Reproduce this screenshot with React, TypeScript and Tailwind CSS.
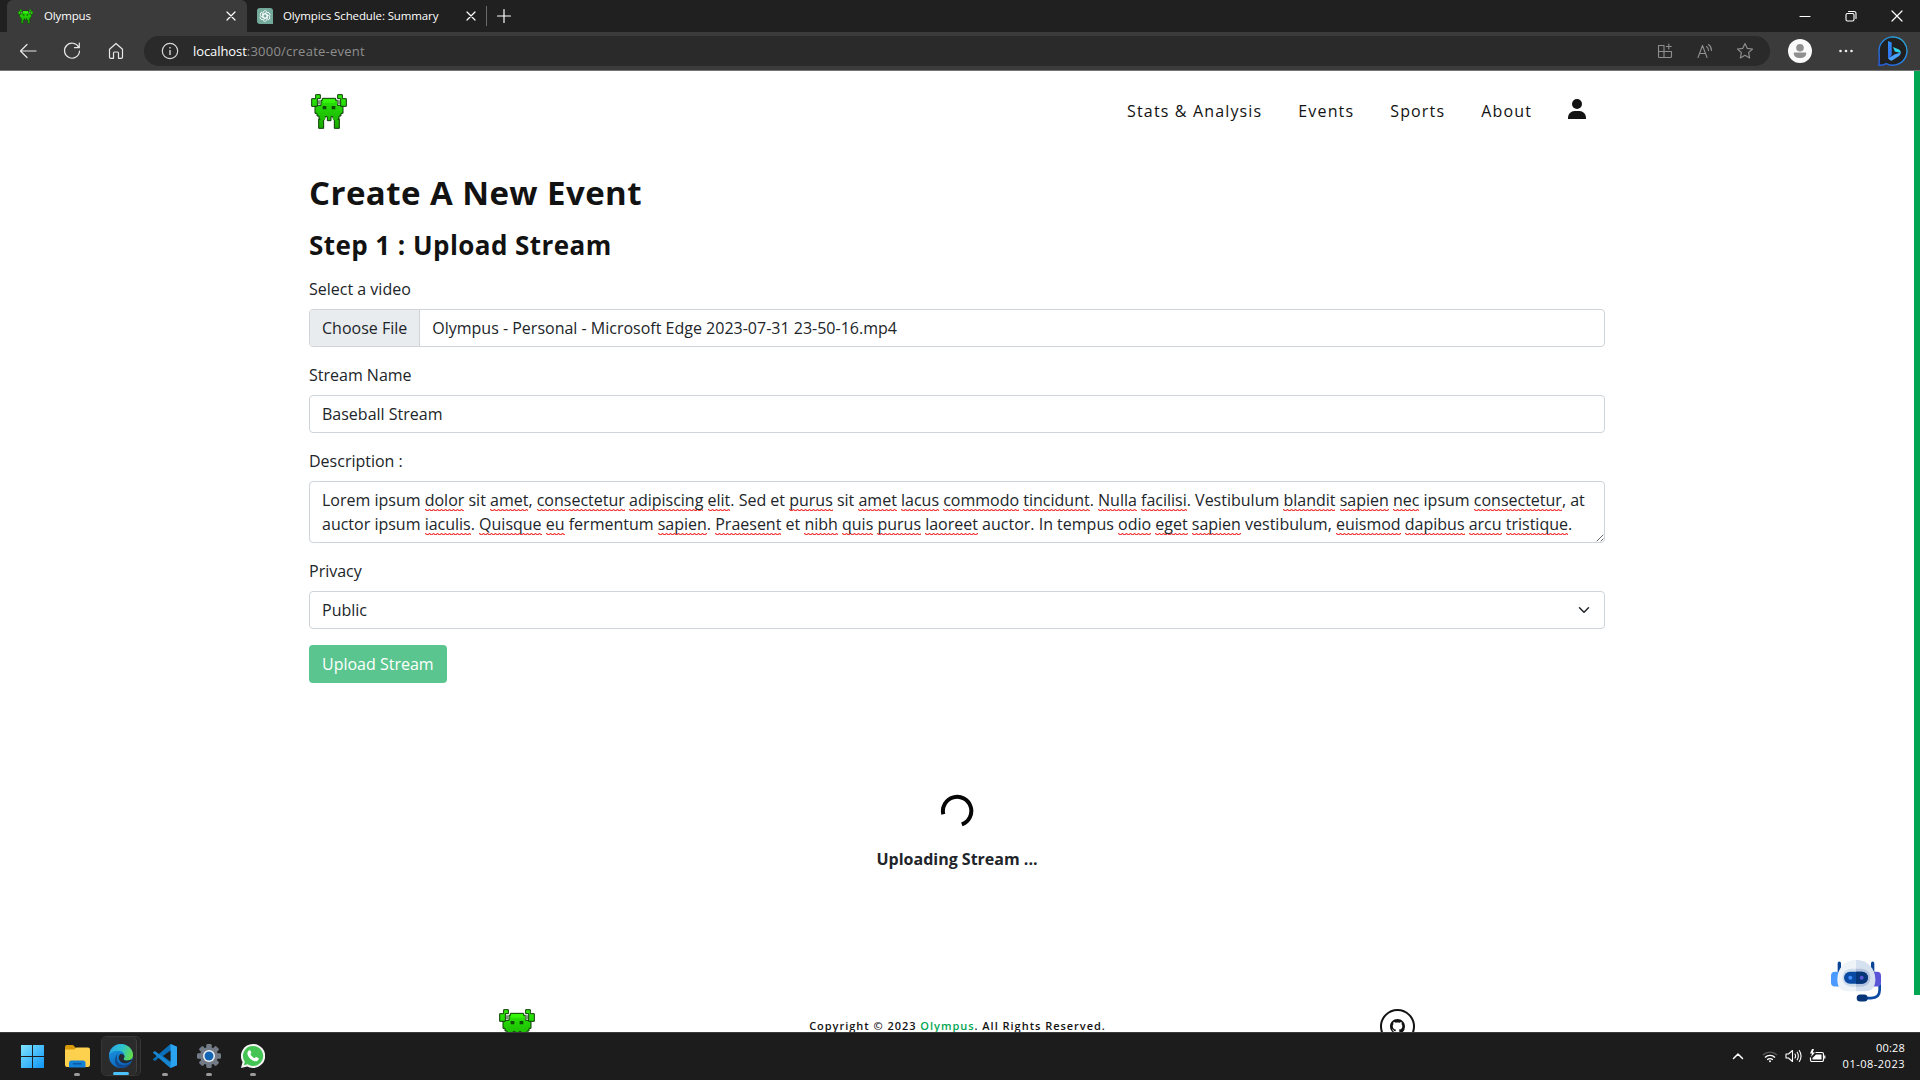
import React from "react";

const Squiggle = ({ children }: { children: React.ReactNode }) => (
  <span className="bg-[linear-gradient(90deg,#ef3a3a_0_1px,#f9a5a5_1px_2px,transparent_2px_3px,#f9a5a5_3px_4px),linear-gradient(90deg,#fbc4c4_0_1px,#f04a4a_1px_2px,#ef3a3a_2px_3px,#f04a4a_3px_4px)] bg-[length:4px_1px,4px_1px] bg-[position:0_calc(100%-1px),0_100%] bg-repeat-x">
    {children}
  </span>
);

const line1: [string, boolean][] = [
  ["Lorem ipsum ", false], ["dolor", true], [" sit ", false], ["amet", true], [", ", false], ["consectetur", true], [" ", false],
  ["adipiscing", true], [" ", false], ["elit", true], [". Sed et ", false], ["purus", true], [" sit ", false], ["amet", true], [" ", false],
  ["lacus", true], [" ", false], ["commodo", true], [" ", false], ["tincidunt", true], [". ", false], ["Nulla", true], [" ", false],
  ["facilisi", true], [". Vestibulum ", false], ["blandit", true], [" ", false], ["sapien", true], [" ", false], ["nec", true],
  [" ipsum ", false], ["consectetur", true], [", at", false],
];
const line2: [string, boolean][] = [
  ["auctor ipsum ", false], ["iaculis", true], [". ", false], ["Quisque", true], [" ", false], ["eu", true], [" fermentum ", false],
  ["sapien", true], [". ", false], ["Praesent", true], [" et ", false], ["nibh", true], [" ", false], ["quis", true], [" ", false],
  ["purus", true], [" ", false], ["laoreet", true], [" auctor. In tempus ", false], ["odio", true], [" ", false], ["eget", true],
  [" ", false], ["sapien", true], [" vestibulum, ", false], ["euismod", true], [" ", false], ["dapibus", true], [" ", false],
  ["arcu", true], [" ", false], ["tristique", true], [".", false],
];

const Line = ({ parts }: { parts: [string, boolean][] }) => (
  <div className="whitespace-pre">
    {parts.map(([t, bad], i) => (bad ? <Squiggle key={i}>{t}</Squiggle> : <span key={i}>{t}</span>))}
  </div>
);

const Alien = ({ className }: { className: string }) => (
  <svg viewBox="0 0 108 105" className={className}>
    <defs>
      <linearGradient id="alien" gradientUnits="userSpaceOnUse" x1="0" y1="0" x2="0" y2="105">
        <stop offset="0" stopColor="#2ff00a" />
        <stop offset="0.45" stopColor="#22cf04" />
        <stop offset="1" stopColor="#18a800" />
      </linearGradient>
    </defs>
    <g fill="url(#alien)" stroke="#0b3d05" strokeWidth="3">
      <path d="M34 13H74V19H80V34H96V58H90V66H84V76H76V74H66V68H60V80H49V68H42V74H32V76H24V66H18V58H12V34H30V19H34Z" />
      <path d="M14 2H28V14H19V37H2V14H14Z" />
      <path d="M94 2H80V14H89V37H106V14H94Z" />
      <path d="M23 76H38V103H23Z" />
      <path d="M70 76H85V103H70Z" />
      <path d="M28 68H42V78H28ZM66 68H80V78H66Z" stroke="none" />
    </g>
    <path d="M36 15H72V26H36Z" fill="#35f50d" />
    <path d="M21 19H29V31H21ZM79 19H87V31H79Z" fill="#7a917a" />
    <path d="M35 36H46V46H35ZM62 36H73V46H62Z" fill="#0c4a05" />
  </svg>
);

const Stroke = ({ d, className, w = 1, box = "0 0 16 16" }: { d: string; className: string; w?: number; box?: string }) => (
  <svg viewBox={box} className={className} fill="none" stroke="currentColor" strokeWidth={w} strokeLinecap="round" strokeLinejoin="round">
    <path d={d} />
  </svg>
);

const OpenAI = () => (
  <svg viewBox="0 0 16 16" className="h-4 w-4">
    <path d="M3 0H13A3 3 0 0 1 16 3V16H3A3 3 0 0 1 0 13V3A3 3 0 0 1 3 0Z" fill="#74aa9c" />
    <g fill="none" stroke="#fff" strokeWidth="0.85">
      {[0, 60, 120, 180, 240, 300].map((a) => (
        <path key={a} transform={`rotate(${a} 8 8)`} d="M5.9 9.3V5A2.3 2.3 0 0 1 10 3.6M5.9 6.8L9.3 4.9" />
      ))}
    </g>
  </svg>
);

const TabStrip = () => (
  <div className="flex h-8 bg-[#202020] pl-[7px] text-[11.5px] text-white">
    <div className="flex w-60 items-center rounded-t-md bg-[#3b3b3b] pl-[11px] pr-2">
      <Alien className="h-[15px] w-[15px]" />
      <span className="ml-[11px] flex-1 tracking-[-0.15px]">Olympus</span>
      <Stroke d="M4 4L12 12M12 4L4 12" className="h-4 w-4" w={1.2} />
    </div>
    <div className="flex w-[239px] items-center pl-[10px] pr-[7px]">
      <OpenAI />
      <span className="ml-[10px] flex-1 whitespace-nowrap tracking-[-0.12px]">Olympics Schedule: Summary</span>
      <Stroke d="M4 4L12 12M12 4L4 12" className="h-4 w-4" w={1.2} />
    </div>
    <div className="my-[6px] w-px bg-[#6b6b6b]" />
    <Stroke d="M8 1.5V14.5M1.5 8H14.5" className="ml-[9px] mt-2 h-4 w-4" w={1.2} />
    <div className="ml-auto mt-2 flex h-4 gap-[30px] pr-[15px]">
      <Stroke d="M3 8.5H13" className="h-4 w-4" w={1.2} />
      <Stroke d="M4.5 5.5H9.5A1.5 1.5 0 0 1 11 7V11.500A1.500 1.500 0 0 1 9.500 13H4.500A1.500 1.500 0 0 1 3 11.500V7A1.500 1.500 0 0 1 4.500 5.500ZM5.500 3.500H11A2 2 0 0 1 13 5.500V10.500" className="h-4 w-4" w={1.100} />
      <Stroke d="M3 3L13 13M13 3L3 13" className="h-4 w-4" w={1.2} />
    </div>
  </div>
);

const Toolbar = () => (
  <div className="flex h-[39px] items-start border-b border-[#757575] bg-[#3b3b3b] pt-1">
    <div className="flex h-[30px] w-36 items-center text-[#e8e8e8]">
      <Stroke box="0 0 20 20" d="M18 10H2.500M9 3.500L2.500 10L9 16.500" className="ml-[18px] h-5 w-5" w={1.2} />
      <Stroke box="0 0 20 20" d="M16.800 6.500A7.500 7.500 0 1 0 17.500 10M17.300 2V6.700H12.500" className="ml-[24px] h-5 w-5" w={1.2} />
      <Stroke box="0 0 20 20" d="M3.500 8.300L10 2.500L16.500 8.300V16A1.300 1.300 0 0 1 15.200 17.300H12.500V12A1 1 0 0 0 11.500 11H8.500A1 1 0 0 0 7.500 12V17.300H4.800A1.300 1.300 0 0 1 3.500 16Z" className="ml-[24px] h-5 w-5" w={1.2} />
    </div>
    <div className="flex h-[30px] w-[1626px] items-center rounded-full bg-[#2a2a2a] pl-[17px] pr-[16px]">
      <svg viewBox="0 0 18 18" className="h-[18px] w-[18px]" fill="none" stroke="#d8d8d8" strokeWidth="1.200">
        <circle cx="9" cy="9" r="7.700" />
        <path d="M9 8V13M9 5V6.400" strokeWidth="1.400" />
      </svg>
      <span className="ml-[14px] pt-px text-[13px] tracking-[-0.08px] text-white">localhost</span>
      <span className="pt-px text-[13px] tracking-[0.24px] text-[#8e8e8e]">:3000/create-event</span>
      <div className="ml-auto flex items-center gap-[22px] text-[#8e8e8e]">
        <Stroke box="0 0 18 18" d="M2.500 3.500H8V15.500H3.500A1 1 0 0 1 2.500 14.500ZM2.500 9.500H15.500V14.500A1 1 0 0 1 14.500 15.500H8M12.800 2V7M10.300 4.500H15.300" className="h-[18px] w-[18px]" w={1.100} />
        <Stroke box="0 0 18 18" d="M2 15.500L6.500 3.500L11 15.500M3.500 11.500H9.500M10.500 4.500Q12.500 6 12.500 8.500M12.500 2.500Q15.500 4.500 15.500 8.500" className="h-[18px] w-[18px]" w={1.100} />
        <Stroke box="0 0 18 18" d="M9 1.500L11.200 6.300L16.500 7L12.600 10.600L13.600 15.900L9 13.300L4.400 15.900L5.400 10.600L1.500 7L6.800 6.300Z" className="h-[18px] w-[18px]" w={1.200} />
      </div>
    </div>
    <div className="flex h-[30px] items-center pl-[18px]">
      <svg viewBox="0 0 24 24" className="h-6 w-6">
        <circle cx="12" cy="12" r="12" fill="#fafafa" />
        <circle cx="12" cy="8.700" r="3.800" fill="#8f8f8f" />
        <path d="M6.300 13.500H17.700A0.800 0.800 0 0 1 18.300 14.400C18 17.500 15.500 19 12 19S6 17.500 5.700 14.400A0.800 0.800 0 0 1 6.300 13.500Z" fill="#8f8f8f" />
      </svg>
      <svg viewBox="0 0 16 4" className="ml-[26px] h-1 w-4" fill="#eee">
        <circle cx="2.500" cy="2" r="1.300" /><circle cx="8" cy="2" r="1.300" /><circle cx="13.500" cy="2" r="1.300" />
      </svg>
      <svg viewBox="0 0 30 30" className="ml-6 h-[30px] w-[30px]">
        <defs>
          <linearGradient id="bingRing" x1="1" y1="0" x2="0.200" y2="1"><stop offset="0" stopColor="#2bb6e0" /><stop offset="1" stopColor="#2563eb" /></linearGradient>
          <linearGradient id="bingB" x1="0" y1="0" x2="0" y2="1"><stop offset="0" stopColor="#2f8df5" /><stop offset="1" stopColor="#2f6df2" /></linearGradient>
        </defs>
        <path d="M15 .8A14.200 14.200 0 1 1 8.200 27.600Q5 29.500 .8 29.200Q1.600 26 1 15A14.200 14.200 0 0 1 15 .8Z" fill="#202020" stroke="url(#bingRing)" strokeWidth="1.300" />
        <path d="M10 5L13.700 6.500V19L10.500 23Q10 22.500 10 21.500Z" fill="url(#bingB)" />
        <path d="M15 11L21 13.500Q23 14.500 22.800 17L16.800 15.500Z" fill="#2fd4e8" />
        <path d="M10.300 22.300L17 18.300L22.800 16.500Q22.800 18.700 21 20L14.500 24.300Q12 25.500 10.300 22.300Z" fill="#4aa3fa" />
      </svg>
    </div>
  </div>
);

const Label = ({ children }: { children: React.ReactNode }) => <div className="mb-2 h-6 leading-6">{children}</div>;

const Page = () => (
  <div className="flex h-[961px] overflow-hidden bg-white font-['Open_Sans',sans-serif] text-base leading-6 text-[#212529]">
    <div className="w-[1914px]">
      <div className="mx-auto w-[1296px]">
        <header className="flex h-20 items-center pr-[19px] text-[#121212]">
          <Alien className="ml-[2px] h-[35px] w-9" />
          <nav className="ml-auto flex items-center gap-9 tracking-[1.15px]">
            <span>Stats &amp; Analysis</span>
            <span>Events</span>
            <span>Sports</span>
            <span>About</span>
            <svg viewBox="0 0 18 20" className="mb-1 h-5 w-[18px]" fill="#121212">
              <circle cx="9" cy="5" r="5" />
              <path d="M0 19.500V18.500A6.500 6.500 0 0 1 6.500 12H11.500A6.500 6.500 0 0 1 18 18.500V19.500Q18 20 17.500 20H.5Q0 20 0 19.500Z" />
            </svg>
          </nav>
        </header>
        <h1 className="mt-[22px] h-10 whitespace-nowrap text-[33px] font-bold leading-10 tracking-[0.44px] text-[#121212]">Create A New Event</h1>
        <h2 className="mt-4 h-8 whitespace-nowrap text-[26px] font-bold leading-8 tracking-[0.44px] text-[#121212]">Step 1 : Upload Stream</h2>
        <div className="mt-4">
          <Label>Select a video</Label>
          <div className="flex h-[38px] overflow-hidden rounded border border-[#ced4da]">
            <span className="border-r border-[#ced4da] bg-[#e9ecef] px-3 py-[6px]">Choose File</span>
            <span className="px-3 py-[6px]">Olympus - Personal - Microsoft Edge 2023-07-31 23-50-16.mp4</span>
          </div>
        </div>
        <div className="mt-4">
          <Label>Stream Name</Label>
          <div className="h-[38px] rounded border border-[#ced4da] px-3 py-[6px]">Baseball Stream</div>
        </div>
        <div className="mt-4">
          <Label>Description :</Label>
          <div className="relative h-[62px] rounded border border-[#ced4da] px-3 py-[6px]">
            <Line parts={line1} />
            <Line parts={line2} />
            <Stroke box="0 0 8 8" d="M1 7L7 1M5 7L7 5" className="absolute bottom-0 right-0 h-2 w-2 text-[#555]" w={0.9} />
          </div>
        </div>
        <div className="mt-4">
          <Label>Privacy</Label>
          <div className="flex h-[38px] items-center justify-between rounded border border-[#ced4da] px-3">
            <span>Public</span>
            <Stroke d="M2 5L8 11L14 5" className="h-3 w-4" w={2} />
          </div>
        </div>
        <div className="mt-4 h-[38px] w-[138px] rounded bg-[#5ac58e] px-[13px] py-[7px] text-white">Upload Stream</div>
        <div className="mt-[111px] flex flex-col items-center">
          <svg viewBox="0 0 34 34" className="h-[34px] w-[34px]" fill="none" stroke="#060606" strokeWidth="4">
            <path d="M3.300 20.300A14.200 14.200 0 1 1 21.800 30.400" />
          </svg>
          <div className="mt-[19px] font-bold">Uploading Stream ...</div>
        </div>
      </div>
      <footer className="ml-[499px] mt-[138px] flex h-[35px] w-[916px] items-center justify-between text-[#121212]">
        <Alien className="h-[35px] w-9" />
        <span className="mb-[2px] text-[11px] font-semibold tracking-[0.98px]">
          Copyright © 2023 <span className="text-[#00a651]">Olympus</span>. All Rights Reserved.
        </span>
        <div className="flex h-[35px] w-[35px] items-center justify-center rounded-full border-2 border-[#121212]">
          <svg viewBox="0 0 16 16" className="h-[15px] w-[15px]" fill="#121212">
            <path d="M8 0C3.580 0 0 3.580 0 8c0 3.540 2.290 6.530 5.470 7.590.4.070.55-.17.55-.38 0-.19-.01-.82-.01-1.490-2.010.37-2.530-.49-2.690-.94-.09-.23-.48-.94-.82-1.130-.28-.15-.68-.52-.01-.53.63-.01 1.080.58 1.230.82.72 1.210 1.870.87 2.330.66.07-.52.28-.87.51-1.070-1.780-.2-3.640-.89-3.640-3.950 0-.87.31-1.590.82-2.150-.08-.2-.36-1.020.08-2.120 0 0 .67-.21 2.200.82.64-.18 1.320-.27 2-.27s1.360.09 2 .27c1.530-1.040 2.200-.82 2.200-.82.44 1.100.16 1.920.08 2.120.51.56.82 1.270.82 2.150 0 3.070-1.870 3.750-3.650 3.950.29.25.54.73.54 1.480 0 1.070-.01 1.930-.01 2.200 0 .21.15.46.55.38A8.010 8.010 0 0 0 16 8c0-4.420-3.580-8-8-8Z" />
          </svg>
        </div>
      </footer>
    </div>
    <div className="h-[924px] w-[6px] bg-[#00a651]" />
  </div>
);

const Robot = () => (
  <svg viewBox="0 0 150 128" className="absolute left-[1831px] top-[959px] h-[43px] w-[50px]">
    <path d="M25 12V38M125 12V38" stroke="#0b4596" strokeWidth="10" strokeLinecap="round" />
    <path d="M146 75V92Q146 117 120 117H95" fill="none" stroke="#0a4aa3" strokeWidth="8" />
    <path d="M24 38H12Q0 38 0 50V70Q0 82 12 82H24Z" fill="#4a9aff" />
    <path d="M126 38H138Q150 38 150 50V70Q150 82 138 82H126Z" fill="#5a54d6" />
    <path d="M75 2C42 2 19 28 19 60C19 88 32 96 52 96H75Z" fill="#eef3f8" />
    <path d="M75 2C108 2 133 28 133 60C133 88 120 96 100 96H75Z" fill="#d6e1ef" />
    <path d="M75 29H62C46 29 34 40 34 56S46 83 62 83H75Z" fill="#cfdcec" />
    <path d="M75 29H90C106 29 118 40 118 56S106 83 90 83H75Z" fill="#b3c2dd" />
    <rect x="39" y="38" width="72" height="36" rx="18" fill="#0a4aa3" />
    <path d="M75 38H93A18 18 0 0 1 93 74H75Z" fill="#063578" />
    <circle cx="58" cy="56" r="6" fill="#3f8dff" />
    <circle cx="92" cy="56" r="6" fill="#5a54d6" />
    <rect x="77" y="106" width="33" height="21" rx="10.500" fill="#063578" />
  </svg>
);

const Dot = () => <div className="absolute left-1/2 top-[40px] h-[3px] w-[6px] -translate-x-1/2 rounded-full bg-[#9a9a9a]" />;

const Taskbar = () => (
  <div className="flex h-12 border-t border-[#3a3a3a] bg-[#1c1c1c] pl-[10px] text-[11px] text-white">
    <div className="flex h-[46px] items-center">
      <div className="flex w-11 justify-center">
        <svg viewBox="0 0 24 24" className="h-[23px] w-[23px]">
          <defs><linearGradient id="win" x1="0" y1="0" x2="1" y2="1"><stop offset="0" stopColor="#7fe3ff" /><stop offset="1" stopColor="#0f95f5" /></linearGradient></defs>
          <path d="M0 0H11.500V11.500H0ZM12.500 0H24V11.500H12.500ZM0 12.500H11.500V24H0ZM12.500 12.500H24V24H12.500Z" fill="url(#win)" />
        </svg>
      </div>
      <div className="relative ml-px flex h-[46px] w-11 items-center justify-center">
        <svg viewBox="0 0 25 23" className="h-[23px] w-[25px]">
          <path d="M0 2Q0 0 2 0H8L11 3V6H0Z" fill="#d99a0a" />
          <path d="M0 4.500H9L11.500 2.500H23Q25 2.500 25 4.500V20Q25 22 23 22H2Q0 22 0 20Z" fill="#fdd04d" />
          <path d="M4 22.500V18Q4 15.500 6.500 15.500H18Q20.500 15.500 20.500 18V22.500Z" fill="#1281d8" />
          <path d="M8 18.800H16.500" stroke="#0b4f93" strokeWidth="1.200" />
        </svg>
        <Dot />
      </div>
      <div className="relative ml-[2px] flex h-10 w-[40px] rounded-[5px] border border-[#363636] bg-[#242424]">
        <div className="relative flex h-[38px] w-[35px] items-center justify-center rounded-[5px] border-r border-[#404040] bg-[#2b2b2b] pl-1">
          <svg viewBox="0 0 24 24" className="h-6 w-6">
            <defs>
              <linearGradient id="edgeTop" x1="0" y1="0.300" x2="1" y2="0.600"><stop offset="0" stopColor="#2aa5e8" /><stop offset="0.500" stopColor="#2fc4c9" /><stop offset="1" stopColor="#66dd45" /></linearGradient>
              <linearGradient id="edgeL" x1="0" y1="0" x2="0.500" y2="1"><stop offset="0" stopColor="#1c9fe8" /><stop offset="1" stopColor="#0c62b8" /></linearGradient>
            </defs>
            <circle cx="12" cy="12" r="12" fill="url(#edgeL)" />
            <path d="M.2 10.500C1 4.500 6 0 12 0C18.500 0 24 5 24 11C24 14.500 21.300 16.500 18.500 16.500C15.500 16.500 14 15.500 14.500 14.500C15.300 13.500 15.500 12.800 15.500 12C15.500 9 12.500 6.800 9 6.800C5 6.800 1.500 8.500 .2 10.500Z" fill="url(#edgeTop)" />
            <path d="M9.300 9.500C7 12 7.300 17 10.500 19.800C13.500 22 18.500 21.800 22.200 18.200C20 22 16.300 24 12.500 24C8.500 23.800 6 20.500 6 16.500C6 13.500 7.500 10.700 9.300 9.500Z" fill="#124a8f" />
            <path d="M11.500 10Q9 12 10 15.500Q12 20 18 19Q21 18.300 22.800 16.800Q24.500 16 22.500 15.600Q16 18 14.300 15.300Q15.500 13.800 15.500 12.300Q14.500 9.500 11.500 10Z" fill="#242a30" />
          </svg>
          <div className="absolute left-[11px] top-[35px] h-[3px] w-4 rounded-full bg-[#4cc2ff]" />
        </div>
      </div>
      <div className="relative ml-[2px] flex h-[46px] w-11 items-center justify-center">
        <svg viewBox="0 0 24 24" className="h-6 w-6">
          <path d="M17.500 0L24 2.800V21.200L17.500 24L6 13.700L2 17L0 15.800V15L17.500 0Z" fill="#0b6fb8" />
          <path d="M0 8.200L2 7L17.500 19V24L0 9Z" fill="#1686d0" />
          <path d="M17.500 0L24 2.800V21.200L17.500 24Z" fill="#2ba4f0" />
          <path d="M17.500 6.500V17.500L10 12Z" fill="#1c1c1c" />
          <path d="M0 9.500L3.200 12L0 14.500Z" fill="#1c1c1c" />
        </svg>
        <Dot />
      </div>
      <div className="relative flex h-[46px] w-11 items-center justify-center">
        <svg viewBox="0 0 24 24" className="h-6 w-6">
          <g fill="#737c86">
            <circle cx="12" cy="12" r="9" />
            {[0, 45, 90, 135].map((a) => (
              <rect key={a} x="9.300" y="0" width="5.400" height="24" rx="1.200" transform={`rotate(${a} 12 12)`} />
            ))}
          </g>
          <circle cx="12" cy="12" r="6" fill="#eef2f6" />
          <circle cx="12" cy="12" r="4.500" fill="#1464b4" />
        </svg>
        <Dot />
      </div>
      <div className="relative flex h-[46px] w-11 items-center justify-center">
        <svg viewBox="0 0 24 24" className="h-6 w-6">
          <path d="M12 0A12 12 0 1 1 6.200 22.400L0 24L1.600 18A12 12 0 0 1 12 0Z" fill="#f5f5f5" />
          <path d="M12 2A10 10 0 1 1 6.600 20.300L2.800 21.300L3.800 17.700A10 10 0 0 1 12 2Z" fill="#43c453" />
          <path d="M8.300 6.300C9 6 9.400 6.300 9.600 6.900L10.300 8.600C10.500 9.200 9.900 9.700 9.400 10.300C10.400 12.200 11.700 13.400 13.700 14.200C14.300 13.600 14.700 12.800 15.300 13L17.300 14C17.900 14.300 17.800 14.800 17.600 15.500C17 17 15.300 17.600 13.600 17.200C10.200 16.200 7.700 13.700 6.600 10.700C6 8.800 6.900 6.900 8.300 6.300Z" fill="#fff" />
        </svg>
        <Dot />
      </div>
    </div>
    <div className="ml-auto flex h-[46px] items-center pr-[15px]">
      <Stroke box="0 0 12 8" d="M1.500 6.500L6 2L10.500 6.500" className="h-2 w-3" w={1.500} />
      <svg viewBox="0 0 16 13" className="ml-[18px] h-[13px] w-4" fill="none" stroke="#fff" strokeWidth="1.400">
        <path d="M1 5A10 10 0 0 1 15 5" stroke="#5a5a5a" />
        <path d="M3 7.500A7 7 0 0 1 13 7.500M5.200 9.800A4 4 0 0 1 10.800 9.800" />
        <circle cx="8" cy="11.300" r="1" fill="#fff" stroke="none" />
      </svg>
      <Stroke box="0 0 17 14" d="M1 5H3.500L7.500 1.500V12.500L3.500 9H1ZM10 5Q11.200 7 10 9M12.200 3.200Q14.500 7 12.200 10.800M14.300 1.500Q17.800 7 14.300 12.500" className="ml-[7px] h-[14px] w-[17px]" w={1.100} />
      <svg viewBox="0 0 17 14" className="ml-[7px] h-[14px] w-[17px]">
        <path d="M6.500 3.500H13A1.500 1.500 0 0 1 14.500 5V11A1.500 1.500 0 0 1 13 12.500H3A1.500 1.500 0 0 1 1.500 11V8.500M15.800 6.500V9.500" fill="none" stroke="#fff" strokeWidth="1.200" />
        <path d="M7 5.500H12.500V10.500H3.500V9Z" fill="#fff" />
        <path d="M3 0L1 4.500H3L2 8L6 3.500H3.800L5 0Z" fill="#fff" />
      </svg>
      <div className="ml-4 flex w-[63px] flex-col items-end whitespace-nowrap leading-4">
        <div className="tracking-[0.2px]">00:28</div>
        <div className="tracking-[0.5px]">01-08-2023</div>
      </div>
    </div>
  </div>
);

export default function App() {
  return (
    <div className="relative flex h-[1080px] w-[1920px] flex-col overflow-hidden font-['Open_Sans',sans-serif]">
      <TabStrip />
      <Toolbar />
      <Page />
      <Taskbar />
      <Robot />
    </div>
  );
}
